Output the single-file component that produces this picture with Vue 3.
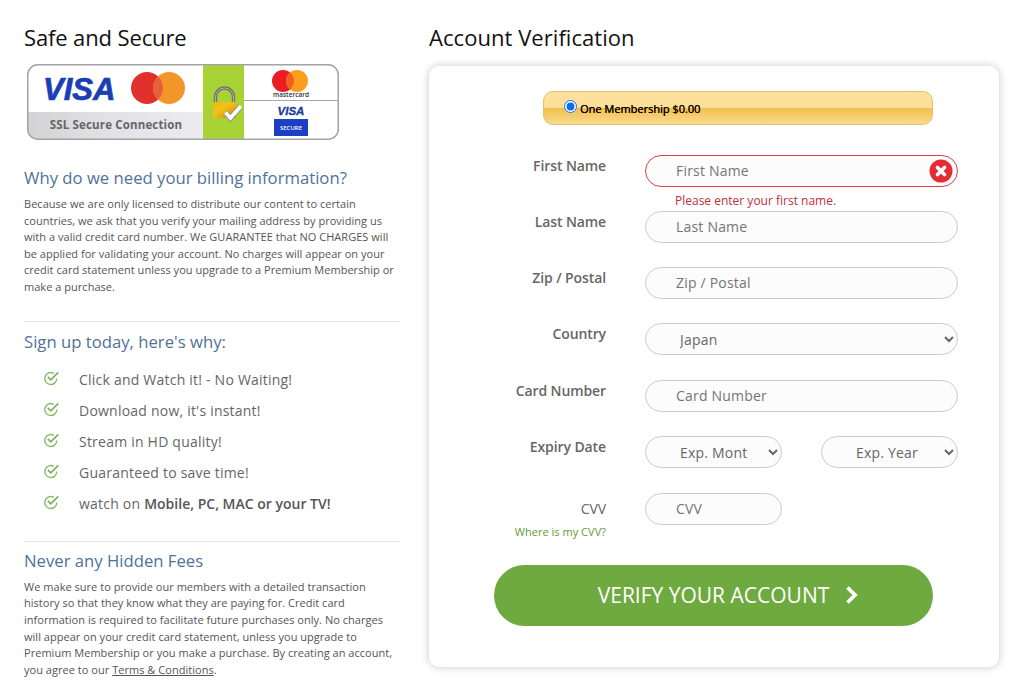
<script setup>
const reasons = [
  'Click and Watch it! - No Waiting!',
  "Download now, it's instant!",
  'Stream in HD quality!',
  'Guaranteed to save time!',
]
</script>

<template>
  <div class="page">
    <aside class="left">
      <h2 class="title t-left">Safe and Secure</h2>
      <svg class="badge" width="314" height="78" viewBox="0 0 314 78">
        <defs>
          <linearGradient id="band" x1="0" x2="1" y1="0" y2="0">
            <stop offset="0" stop-color="#d2d2d4" />
            <stop offset="0.45" stop-color="#e2e2e5" />
            <stop offset="1" stop-color="#ececf0" />
          </linearGradient>
          <linearGradient id="lockBody" x1="0" x2="1" y1="0" y2="1">
            <stop offset="0" stop-color="#eeb40e" />
            <stop offset="0.4" stop-color="#f2c31c" />
            <stop offset="1" stop-color="#d5830a" />
          </linearGradient>
          <clipPath id="inner"><rect x="1.750" y="0.750" width="310.500" height="74.500" rx="10" /></clipPath>
        </defs>
        <rect x="1.750" y="0.750" width="310.500" height="74.500" rx="10" fill="#fff" />
        <g clip-path="url(#inner)">
          <rect x="1" y="48" width="176" height="28" fill="url(#band)" />
          <rect x="177" y="0" width="41" height="76" fill="#a9d236" />
          <line x1="218" x2="313" y1="36.500" y2="36.500" stroke="#a8a8a8" />
        </g>
        <text x="17" y="36" class="visa-big">VISA</text>
        <circle cx="121" cy="24" r="16" fill="#e1312f" />
        <circle cx="143" cy="24" r="16" fill="#f2962a" />
        <path d="M132 12.400a16 16 0 0 1 0 23.200a16 16 0 0 1 0-23.200z" fill="#e7603a" />
        <text x="90" y="65" class="ssl" text-anchor="middle">SSL Secure Connection</text>
        <path d="M189.500 39v-6a9 9 0 0 1 18 0v6" fill="none" stroke="#6f7066" stroke-width="3.400" />
        <path d="M189.500 39v-6a9 9 0 0 1 18 0v6" fill="none" stroke="#b5b5a8" stroke-width="1" />
        <rect x="187" y="38" width="23" height="16" rx="1" fill="url(#lockBody)" />
        <path d="M199.500 48.500l5 5.500 10.500-12" fill="none" stroke="#8f8f7c" stroke-width="5.500" />
        <path d="M199.500 48.500l5 5.500 10.500-12" fill="none" stroke="#fff" stroke-width="3.800" />
        <circle cx="257" cy="17" r="11" fill="#eb1c24" />
        <circle cx="271" cy="17" r="11" fill="#f99f1b" />
        <path d="M264 8.500a11 11 0 0 1 0 17a11 11 0 0 1 0-17z" fill="#f2601e" />
        <text x="265" y="33" class="mc" text-anchor="middle">mastercard</text>
        <text x="265" y="51" class="visa-small" text-anchor="middle">VISA</text>
        <rect x="248" y="55" width="34" height="17" fill="#1d3fc4" />
        <text x="265" y="66" class="secure" text-anchor="middle">SECURE</text>
        <rect x="1.750" y="0.750" width="310.500" height="74.500" rx="10" fill="none" stroke="#a3a3a3" stroke-width="1.500" />
      </svg>

      <h3 class="sub first">Why do we need your billing information?</h3>
      <p class="copy">Because we are only licensed to distribute our content to certain countries, we ask that you verify your mailing address by providing us with a valid credit card number. We GUARANTEE that NO CHARGES will be applied for validating your account. No charges will appear on your credit card statement unless you upgrade to a Premium Membership or make a purchase.</p>

      <hr class="rule" />
      <h3 class="sub">Sign up today, here's why:</h3>
      <ul class="why">
        <li v-for="r in reasons" :key="r">
          <svg class="tick" width="16" height="15" viewBox="0 0 16 15"><path d="M12.800 7.500a6 6 0 1 1-3-5.200" fill="none" stroke="#8ab86a" stroke-width="1.400" /><path d="M3.800 5.800l3 3 7.500-7.500" fill="none" stroke="#7cb15a" stroke-width="1.700" /></svg>
          <span>{{ r }}</span>
        </li>
        <li>
          <svg class="tick" width="16" height="15" viewBox="0 0 16 15"><path d="M12.800 7.500a6 6 0 1 1-3-5.200" fill="none" stroke="#8ab86a" stroke-width="1.400" /><path d="M3.800 5.800l3 3 7.500-7.500" fill="none" stroke="#7cb15a" stroke-width="1.700" /></svg>
          <span>watch on <b>Mobile, PC, MAC or your TV!</b></span>
        </li>
      </ul>

      <hr class="rule second" />
      <h3 class="sub">Never any Hidden Fees</h3>
      <p class="copy">We make sure to provide our members with a detailed transaction history so that they know what they are paying for. Credit card information is required to facilitate future purchases only. No charges will appear on your credit card statement, unless you upgrade to Premium Membership or you make a purchase. By creating an account, you agree to our <a class="terms">Terms &amp; Conditions</a>.</p>
    </aside>

    <main class="right">
      <h2 class="title">Account Verification</h2>
      <form class="card" @submit.prevent>
        <label class="plan"><input type="radio" checked name="plan" /><span>One Membership $0.00</span></label>

        <div class="row">
          <label class="lbl">First Name</label>
          <div class="field">
            <input class="ctl wide error" placeholder="First Name" />
            <span class="err-icon">
              <svg width="24" height="24" viewBox="0 0 24 24"><circle cx="12" cy="12" r="11.500" fill="#e52c34" /><path d="M8.500 8.500l7 7M15.500 8.500l-7 7" stroke="#fff" stroke-width="3.600" stroke-linecap="round" /></svg>
            </span>
            <div class="err-text">Please enter your first name.</div>
          </div>
        </div>
        <div class="row">
          <label class="lbl">Last Name</label>
          <div class="field"><input class="ctl wide" placeholder="Last Name" /></div>
        </div>
        <div class="row">
          <label class="lbl">Zip / Postal</label>
          <div class="field"><input class="ctl wide" placeholder="Zip / Postal" /></div>
        </div>
        <div class="row tall">
          <label class="lbl">Country</label>
          <div class="field"><select class="ctl wide sel"><option>Japan</option></select></div>
        </div>
        <div class="row">
          <label class="lbl">Card Number</label>
          <div class="field"><input class="ctl wide" placeholder="Card Number" /></div>
        </div>
        <div class="row tall">
          <label class="lbl">Expiry Date</label>
          <div class="field pair">
            <select class="ctl half sel"><option>Exp. Month</option></select>
            <select class="ctl half sel"><option>Exp. Year</option></select>
          </div>
        </div>
        <div class="row">
          <div class="lbl cvv">
            <label>CVV</label>
            <a class="where">Where is my CVV?</a>
          </div>
          <div class="field"><input class="ctl half" placeholder="CVV" /></div>
        </div>

        <button class="verify" type="submit">
          <span>VERIFY YOUR ACCOUNT</span>
          <svg width="14" height="20" viewBox="0 0 14 20"><path d="M2.500 2.500l7.500 7.500-7.500 7.500" fill="none" stroke="#fff" stroke-width="3.800" /></svg>
        </button>
      </form>
    </main>
  </div>
</template>

<style>
html, body { margin: 0; background: #fff; }
</style>

<style scoped>
.page {
  display: flex;
  gap: 29px;
  padding: 23px 15px 0 24px;
  height: 696px;
  box-sizing: border-box;
  overflow: hidden;
  font-family: "Open Sans", sans-serif;
  color: #555;
}
.left { width: 376px; flex: none; }
.right { width: 570px; flex: none; }
.title {
  margin: 0;
  font-size: 22px;
  line-height: 28px;
  font-weight: 400;
  color: #111;
  letter-spacing: 0.05px;
}
.t-left { letter-spacing: -0.13px; }
.badge { display: block; margin: 13px 0 0 2px; }
.visa-big { font: italic 700 31px "Liberation Sans", sans-serif; fill: #1a3fb5; stroke: #1a3fb5; stroke-width: 0.7px; }
.visa-small { font: italic 700 11.500px "Liberation Sans", sans-serif; fill: #1a3a9c; stroke: #1a3a9c; stroke-width: 0.3px; }
.ssl { font: 700 11.500px "Open Sans", sans-serif; fill: #666; letter-spacing: 0.15px; }
.mc { font: 600 6.500px "Open Sans", sans-serif; fill: #333; }
.secure { font: 600 6px "Open Sans", sans-serif; fill: #fff; }
.sub {
  margin: 0;
  font-size: 16.700px;
  line-height: 24px;
  font-weight: 400;
  color: #4f7299;
}
.sub.first { margin-top: 24px; }
.copy {
  margin: 6px 0 0;
  font-size: 11px;
  line-height: 16.600px;
  letter-spacing: 0.03px;
  color: #555;
}
.terms { text-decoration: underline; }
.rule { border: 0; border-top: 1px solid #e5e5e5; margin: 25px 0 8px; }
.rule.second { margin: 15.400px 0 7px; }
.why { list-style: none; margin: 16px 0 0; padding: 0 0 0 20px; }
.why li {
  display: flex;
  height: 31.200px;
  align-items: flex-start;
  font-size: 14px;
  line-height: 20px;
  letter-spacing: 0.22px;
  color: #666;
}
.why b { font-weight: 600; color: #555; letter-spacing: 0; }
.tick { flex: none; margin: 1px 19px 0 0; }
.card {
  margin-top: 15px;
  height: 601px;
  box-sizing: border-box;
  background: #fff;
  border-radius: 10px;
  box-shadow: 0 0 8px rgba(0, 0, 0, 0.22);
  padding: 25px 0 0;
}
.plan {
  display: flex;
  align-items: center;
  width: 390px;
  height: 34px;
  margin-left: 114px;
  margin-bottom: 30px;
  padding-left: 20px;
  box-sizing: border-box;
  border: 1px solid #e3bf6a;
  border-radius: 10px;
  background: linear-gradient(#fde29e 0, #fbdf98 50%, #f3bf4c 51%, #fadb8f 100%);
  font-size: 11px;
  color: #000;
  text-shadow: 0.15px 0 #000;
}
.plan input { margin: 0 3px 3px 0; width: 13px; height: 13px; accent-color: #0a6cff; }
.row {
  display: flex;
  height: 56px;
}
.row.tall { height: 57px; }
.lbl {
  width: 177px;
  flex: none;
  text-align: right;
  font-size: 14px;
  line-height: 20px;
  font-weight: 600;
  color: #666;
  padding-top: 1px;
  letter-spacing: -0.1px;
}
.lbl.cvv { font-weight: 400; padding-top: 6px; }
.where {
  display: block;
  margin-top: 6px;
  font-size: 11px;
  line-height: 14px;
  font-weight: 400;
  letter-spacing: 0.02px;
  color: #639c38;
}
.field { position: relative; margin-left: 39px; width: 313px; }
.pair { display: flex; justify-content: space-between; }
.ctl {
  height: 32px;
  box-sizing: border-box;
  border: 1px solid #ccc;
  border-radius: 16px;
  background: #fcfcfc;
  font: 14px "Open Sans", sans-serif;
  letter-spacing: 0.2px;
  color: #666;
  padding: 0 10px 2px 30px;
  outline: none;
}
.ctl::placeholder { color: #757575; opacity: 1; }
.wide { width: 313px; display: block; }
.half { width: 137px; display: block; }
.sel { padding: 0 18px 0 30px; }
.error { border-color: #d8404a; }
.err-icon { position: absolute; top: 4px; right: 5px; height: 24px; }
.err-text {
  position: absolute;
  top: 38px;
  left: 30px;
  font-size: 12px;
  line-height: 16px;
  color: #c0303a;
  white-space: nowrap;
}
.verify {
  display: flex;
  align-items: center;
  justify-content: center;
  gap: 16px;
  width: 439px;
  height: 61px;
  margin: 16px 0 0 65px;
  border: 0;
  border-radius: 31px;
  background: #6eaa3f;
  color: #fff;
  font: 21px "Open Sans", sans-serif;
  padding: 0 0 2px 30px;
}
</style>
